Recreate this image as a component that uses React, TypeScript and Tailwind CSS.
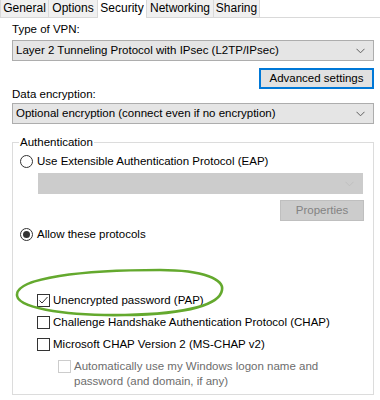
import React from "react";

const Chevron = ({ color = "#606060" }: { color?: string }) => (
  <svg width="9" height="6" viewBox="0 0 9 6" className="shrink-0">
    <path d="M0.5 0.8 L4.5 4.8 L8.5 0.8" fill="none" stroke={color} strokeWidth="1" />
  </svg>
);

const Dropdown = ({ text, disabled = false, className = "" }: { text?: string; disabled?: boolean; className?: string }) => (
  <div
    className={
      "h-[21px] flex items-center justify-between pl-[3px] pr-[8px] border " +
      (disabled ? "bg-[#cccccc] border-[#cccccc] " : "bg-[#e5e5e5] border-[#adadad] ") +
      className
    }
  >
    <span className="leading-[15px] whitespace-nowrap">{text}</span>
    <Chevron color={disabled ? "#bfbfbf" : "#606060"} />
  </div>
);

const Radio = ({ checked = false }: { checked?: boolean }) => (
  <span className="w-[13px] h-[13px] rounded-full border border-[#333333] bg-white flex items-center justify-center shrink-0">
    {checked && <span className="w-[7px] h-[7px] rounded-full bg-[#333333]" />}
  </span>
);

const Check = ({ checked = false, disabled = false }: { checked?: boolean; disabled?: boolean }) => (
  <span
    className={
      "w-[13px] h-[13px] border bg-white shrink-0 flex items-center justify-center " +
      (disabled ? "border-[#cccccc]" : "border-[#333333]")
    }
  >
    {checked && (
      <svg width="11" height="11" viewBox="0 0 11 11">
        <path d="M1.5 5.5 L4 8 L9.5 2" fill="none" stroke="#333333" strokeWidth="1" />
      </svg>
    )}
  </span>
);

const tabs = [
  { label: "General", w: "w-[49px]" },
  { label: "Options", w: "w-[50px]" },
  { label: "Security", w: "w-[50px]", active: true },
  { label: "Networking", w: "w-[68px]" },
  { label: "Sharing", w: "w-[47px]" },
];

export default function App() {
  return (
    <div className="relative w-[380px] h-[400px] overflow-hidden bg-white text-black text-[11.5px] font-['Liberation_Sans',Arial,sans-serif]">
      {/* tab strip */}
      <div className="flex items-end h-[18px] border-b border-[#d9d9d9] text-[12px]">
        {tabs.map((t) =>
          t.active ? (
            <div key={t.label} className={t.w + " h-[19px] -mb-[1px] bg-white border border-b-0 border-[#d9d9d9] -ml-[1px] text-center leading-[16px]"}>
              {t.label}
            </div>
          ) : (
            <div key={t.label} className={t.w + " h-[18px] bg-[#f0f0f0] border border-b-0 border-[#d9d9d9] -ml-[1px] first:ml-0 text-center leading-[17px]"}>
              {t.label}
            </div>
          )
        )}
      </div>

      <div className="flex flex-col pl-[12px] pr-[6px]">
        <div className="mt-[4px] leading-[15px]">Type of VPN:</div>
        <Dropdown className="mt-[3px]" text="Layer 2 Tunneling Protocol with IPsec (L2TP/IPsec)" />

        <button className="self-end mt-[7px] w-[115px] h-[21px] border-2 border-[#0078d7] bg-[#e1e1e1] leading-[15px] text-center">
          Advanced settings
        </button>

        <div className="-mt-[2px] leading-[15px]">Data encryption:</div>
        <Dropdown className="mt-[1px]" text="Optional encryption (connect even if no encryption)" />

        {/* Authentication group */}
        <div className="relative mt-[18px] w-[362px] h-[253px] border border-[#dcdcdc] flex flex-col">
          <span className="absolute -top-[8px] left-[6px] px-[1px] bg-white leading-[15px]">Authentication</span>

          <div className="flex items-center gap-[4px] mt-[11px] ml-[7px] h-[15px]">
            <Radio />
            <span className="leading-[15px]">Use Extensible Authentication Protocol (EAP)</span>
          </div>

          <Dropdown disabled className="mt-[4px] ml-[25px] mr-[10px]" />

          <div className="self-end mr-[9px] mt-[6px] w-[84px] h-[21px] border border-[#bfbfbf] bg-[#cccccc] text-[#838383] leading-[19px] text-center">
            Properties
          </div>

          <div className="flex items-center gap-[4px] mt-[6px] ml-[7px] h-[15px]">
            <Radio checked />
            <span className="leading-[15px]">Allow these protocols</span>
          </div>

          <div className="flex flex-col ml-[24px] mt-[51px] gap-[7px]">
            <div className="flex items-center gap-[3px] h-[15px]">
              <Check checked />
              <span className="leading-[15px]">Unencrypted password (PAP)</span>
            </div>
            <div className="flex items-center gap-[3px] h-[15px]">
              <Check />
              <span className="leading-[15px]">Challenge Handshake Authentication Protocol (CHAP)</span>
            </div>
            <div className="flex items-center gap-[3px] h-[15px]">
              <Check />
              <span className="leading-[15px]">Microsoft CHAP Version 2 (MS-CHAP v2)</span>
            </div>
            <div className="flex items-start gap-[3px] ml-[21px] text-[#6d6d6d]">
              <span className="mt-[1px]"><Check disabled /></span>
              <span className="leading-[15px]">
                Automatically use my Windows logon name and
                <br />
                password (and domain, if any)
              </span>
            </div>
          </div>
        </div>
      </div>

      {/* hand-drawn highlight */}
      <svg className="absolute left-0 top-0 pointer-events-none" width="380" height="400">
        <path
          d="M17 294 C 19 278 80 270 160 270 C 205 270 224 280 222 290 C 220 304 190 314 125 315 C 60 316 15 307 17 294 Z"
          fill="none"
          stroke="#64a92e"
          strokeWidth="2.6"
        />
      </svg>
    </div>
  );
}
